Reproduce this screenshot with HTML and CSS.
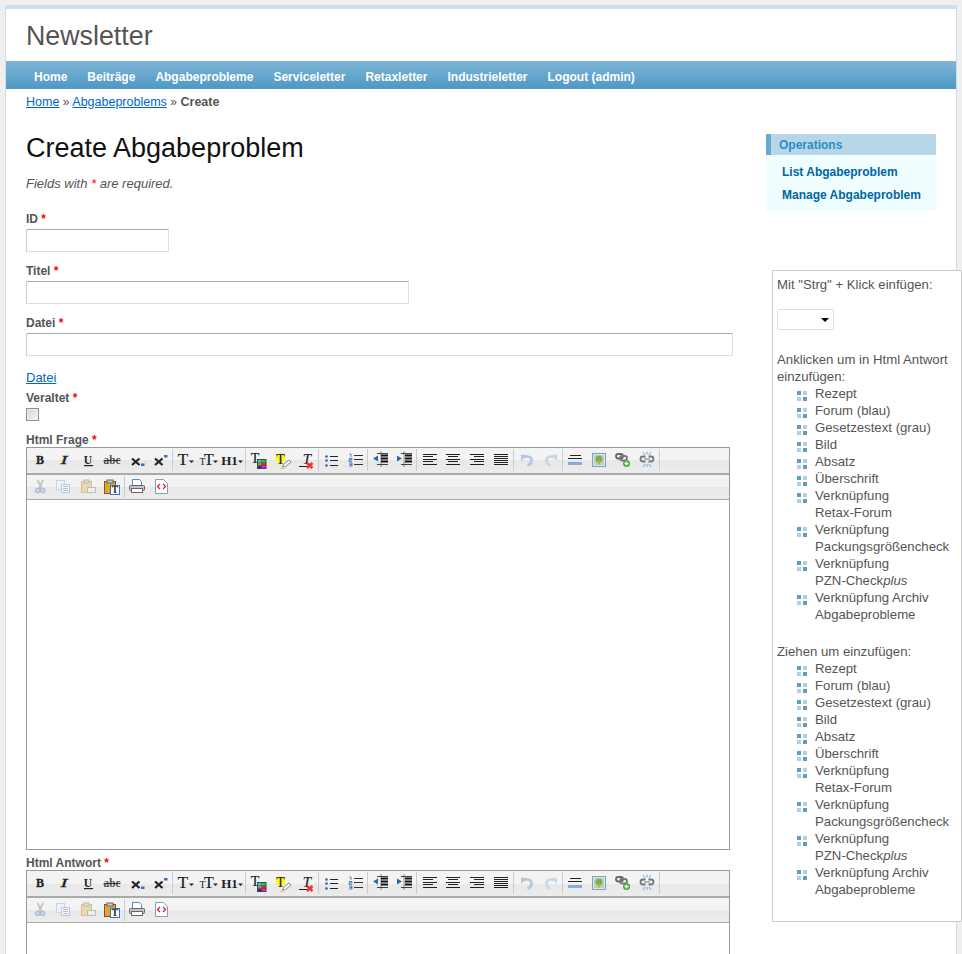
FILE: index.html
```html
<!DOCTYPE html>
<html lang="de">
<head>
<meta charset="utf-8">
<title>Newsletter - Create Abgabeproblem</title>
<link rel="stylesheet" href="styles.css">
</head>
<body>
<svg class="defs" width="0" height="0" aria-hidden="true">
  <defs>
    <symbol id="i-b" viewBox="0 0 24 24"><text x="12" y="16" class="t-serif t-bold" font-size="12" text-anchor="middle" stroke="#222" stroke-width=".3">B</text></symbol>
    <symbol id="i-i" viewBox="0 0 24 24"><text x="12" y="16" class="t-serif t-it" font-size="12" text-anchor="middle" stroke="#222" stroke-width=".3" textLength="7" lengthAdjust="spacingAndGlyphs">I</text></symbol>
    <symbol id="i-u" viewBox="0 0 24 24"><text x="12" y="15.500" class="t-serif t-bold" font-size="11.500" text-anchor="middle">U</text><rect x="8" y="17" width="9" height="1.200" fill="#222"/></symbol>
    <symbol id="i-s" viewBox="0 0 24 24"><text x="12" y="16" class="t-serif t-bold" font-size="11.500" text-anchor="middle" fill-opacity=".8" textLength="17" lengthAdjust="spacingAndGlyphs">abc</text><rect x="3.500" y="12" width="17" height="1" fill="#333"/></symbol>
    <symbol id="i-sub" viewBox="0 0 24 24"><path d="M8 10.500l7.500 6.500M15.500 10.500l-7.500 6.500" stroke="#222" stroke-width="2.200" fill="none"/><rect x="17" y="15.500" width="3.500" height="2.500" fill="#3a6fc0"/></symbol>
    <symbol id="i-sup" viewBox="0 0 24 24"><path d="M7 10.500l7.500 6.500M14.500 10.500l-7.500 6.500" stroke="#222" stroke-width="2.200" fill="none"/><rect x="16" y="7" width="3.500" height="2.500" fill="#3a6fc0"/></symbol>
    <symbol id="i-font" viewBox="0 0 24 24"><text x="10" y="17" class="t-serif" font-size="17" text-anchor="middle" stroke="#222" stroke-width=".2">T</text><path d="M16 12.500h5l-2.500 2.500z" fill="#222"/></symbol>
    <symbol id="i-size" viewBox="0 0 24 24"><text x="5.500" y="17" class="t-serif" font-size="10" text-anchor="middle">T</text><text x="12" y="17" class="t-serif" font-size="16" text-anchor="middle" stroke="#222" stroke-width=".2">T</text><path d="M16 12.500h5l-2.500 2.500z" fill="#222"/></symbol>
    <symbol id="i-h1" viewBox="0 0 24 24"><text x="8.500" y="17" class="t-serif t-bold" font-size="13" text-anchor="middle">H1</text><path d="M17 12.500h5l-2.500 2.500z" fill="#222"/></symbol>
    <symbol id="i-color" viewBox="0 0 24 24"><text x="9" y="15" class="t-serif" font-size="14" text-anchor="middle" stroke="#222" stroke-width=".2">T</text><rect x="11" y="11" width="9.500" height="10" fill="#445"/><rect x="12" y="12" width="3.500" height="2.500" fill="#1dd"/><rect x="16" y="12" width="3.500" height="2.500" fill="#2c2"/><rect x="12" y="15" width="3.500" height="2.500" fill="#c80"/><rect x="16" y="15" width="3.500" height="2.500" fill="#e22"/><rect x="12" y="18" width="3.500" height="2" fill="#22d"/><rect x="16" y="18" width="3.500" height="2" fill="#e2e"/></symbol>
    <symbol id="i-hilite" viewBox="0 0 24 24"><circle cx="10.500" cy="10" r="4.800" fill="#ff0"/><text x="10.500" y="16" class="t-serif" font-size="14" text-anchor="middle" stroke="#222" stroke-width=".2">T</text><path d="M12.500 19l1-2.500 5.500-4.500 2 2-5.500 4.500z" fill="#fff" stroke="#666" stroke-width=".8"/><path d="M10 21h5l-1.500-2.500-2 .500z" fill="#e8c878"/></symbol>
    <symbol id="i-clear" viewBox="0 0 24 24"><text x="13" y="16" class="t-serif t-it" font-size="15" text-anchor="middle" stroke="#222" stroke-width=".2">T</text><rect x="5" y="18" width="13" height="1" fill="#222"/><path d="M13 15l5.500 5M18.500 15l-5.500 5" stroke="#e33" stroke-width="2.400"/></symbol>
    <symbol id="i-ul" viewBox="0 0 24 24"><path d="M11 8.500h8M11 12.500h8M11 17.500h8" stroke="#222"/><circle cx="7.500" cy="8.500" r="1.300" fill="#2a66b8"/><circle cx="7.500" cy="12.500" r="1.300" fill="#2a66b8"/><circle cx="7.500" cy="17.500" r="1.300" fill="#2a66b8"/></symbol>
    <symbol id="i-ol" viewBox="0 0 24 24"><path d="M11 7.500h9M11 11.500h9M11 16.500h9" stroke="#333"/><path d="M6.500 6h1.500v3M6 10.500h3v1.300h-3v1.500h3M6 15h3v3h-3M6.500 16.500h2.500" stroke="#2a66b8" fill="none" stroke-width=".8"/></symbol>
    <symbol id="i-out" viewBox="0 0 24 24"><path d="M9 5.500h11M9 16.500h11" stroke="#444"/><path d="M13 7.500h7M13 10.500h7M13 13.500h7" stroke="#111" stroke-width="1.800"/><path d="M13 3.500v15" stroke="#222" stroke-dasharray="1 1"/><path d="M5 10.500l5-3v6z" fill="#2a66b8"/></symbol>
    <symbol id="i-in" viewBox="0 0 24 24"><path d="M9 5.500h11M9 16.500h11" stroke="#444"/><path d="M13 7.500h7M13 10.500h7M13 13.500h7" stroke="#111" stroke-width="1.800"/><path d="M12 3.500v15" stroke="#222" stroke-dasharray="1 1"/><path d="M10 10.500l-5-3v6z" fill="#2a66b8"/></symbol>
    <symbol id="i-al" viewBox="0 0 24 24"><path d="M6 6.500h14M6 8.500h10M6 11.500h14M6 13.500h10M6 16.500h14" stroke="#222"/></symbol>
    <symbol id="i-ac" viewBox="0 0 24 24"><path d="M5 6.500h14M7 8.500h10M5 11.500h14M7 13.500h10M5 16.500h14" stroke="#222"/></symbol>
    <symbol id="i-ar" viewBox="0 0 24 24"><path d="M5 6.500h14M9 8.500h10M5 11.500h14M9 13.500h10M5 16.500h14" stroke="#222"/></symbol>
    <symbol id="i-aj" viewBox="0 0 24 24"><path d="M5 6.500h14M5 8.500h14M5 10.500h14M5 12.500h14M5 14.500h14M5 16.500h14" stroke="#222"/></symbol>
    <symbol id="i-undo" viewBox="0 0 24 24"><path d="M10 9c5-1.500 8 .5 7.500 4-.3 2.500-2.500 4-4 4.500" stroke="#b4c8de" stroke-width="2.600" fill="none"/><path d="M7 6.500v6.500l6-6z" fill="#b4c8de"/></symbol>
    <symbol id="i-redo" viewBox="0 0 24 24"><path d="M16 9c-5-1.500-8 .5-7.500 4 .3 2.500 2.500 4 4 4.500" stroke="#c8d8e8" stroke-width="2.600" fill="none"/><path d="M19 6.500v6.500l-6-6z" fill="#c8d8e8"/></symbol>
    <symbol id="i-hr" viewBox="0 0 24 24"><path d="M7 7.500h11M5 10.500h14" stroke="#222"/><rect x="5" y="14" width="14" height="3" fill="#8aa9dc"/></symbol>
    <symbol id="i-img" viewBox="0 0 24 24"><rect x="5.500" y="5.500" width="13" height="13" fill="#dce6f2" stroke="#7f9fc9"/><rect x="7" y="7" width="10" height="10" fill="#b8d8a8"/><circle cx="12" cy="11" r="3.500" fill="#7ab05f"/><rect x="11" y="13" width="2" height="3.500" fill="#e0a040"/></symbol>
    <symbol id="i-link" viewBox="0 0 24 24"><rect x="5" y="6" width="7" height="4.500" rx="2.200" fill="none" stroke="#666" stroke-width="1.800"/><rect x="9" y="8" width="7" height="4.500" rx="2.200" fill="none" stroke="#777" stroke-width="1.800"/><circle cx="15.500" cy="15.500" r="3.500" fill="#4aa83a"/><path d="M15.500 13.500v4M13.500 15.500h4" stroke="#fff" stroke-width="1.300"/></symbol>
    <symbol id="i-unlink" viewBox="0 0 24 24"><path d="M10.500 8.500h-2.500a2.500 2.500 0 0 0 0 5h2.500M13.500 8.500h2.500a2.500 2.500 0 0 1 0 5h-2.500" fill="none" stroke="#777" stroke-width="1.800"/><path d="M9 11h6" stroke="#777"/><path d="M8 4l2 3M16 4l-2 3M12 3.500v3M8 19l2-3M16 19l-2-3M12 19v-3" stroke="#6fa8e0"/></symbol>
    <symbol id="i-cut" viewBox="0 0 24 24"><path d="M9.500 5l4 8.500M15 5l-4 8.500" stroke="#c4c4c4" stroke-width="1.800"/><circle cx="9.700" cy="15.500" r="2" fill="none" stroke="#a9bcd8" stroke-width="1.600"/><circle cx="14.700" cy="15.500" r="2" fill="none" stroke="#a9bcd8" stroke-width="1.600"/></symbol>
    <symbol id="i-copy" viewBox="0 0 24 24"><rect x="4.500" y="5.500" width="8" height="9" fill="#eef1f8" stroke="#c8d2e8"/><rect x="9.500" y="9.500" width="8" height="8" fill="#f6f8fc" stroke="#b8c8e4"/><path d="M11 11.500h5M11 13.500h5M11 15.500h5" stroke="#a8bce0"/></symbol>
    <symbol id="i-paste" viewBox="0 0 24 24"><rect x="5.500" y="6.500" width="10" height="11" fill="#ecd9a8" stroke="#d4c090"/><rect x="8" y="5" width="5" height="3" fill="#ddd" stroke="#bbb"/><rect x="11.500" y="12.500" width="8" height="5" fill="#eee" stroke="#bbb"/></symbol>
    <symbol id="i-pastet" viewBox="0 0 24 24"><rect x="4.500" y="6.500" width="11" height="12" fill="#e0a830" stroke="#7a5a20"/><rect x="7" y="5" width="6" height="3" fill="#ccc" stroke="#666"/><rect x="10.500" y="10.500" width="9" height="9" fill="#fff" stroke="#3a6fc0"/><text x="15" y="18" class="t-serif t-bold" font-size="9.500" text-anchor="middle">T</text></symbol>
    <symbol id="i-print" viewBox="0 0 24 24"><path d="M7.500 10.500v-6h7l2 2v4" fill="#fff" stroke="#5a86c8"/><rect x="4.500" y="10.500" width="15" height="5" rx="1" fill="#c4c4c4" stroke="#666"/><rect x="6.500" y="13.500" width="11" height="4" fill="#fff" stroke="#666"/></symbol>
    <symbol id="i-src" viewBox="0 0 24 24"><path d="M6.500 4.500h8l4 4v10h-12z" fill="#fff" stroke="#7f9fc9"/><path d="M11 9l-2.500 2.500 2.500 2.500M14 9l2.500 2.500-2.500 2.500" stroke="#d22" fill="none" stroke-width="1.300"/></symbol>
  </defs>
</svg>

<div class="page">
  <header class="header"><div class="logo">Newsletter</div></header>
  <nav class="mainmenu">
    <a href="#">Home</a><a href="#">Beiträge</a><a href="#">Abgabeprobleme</a><a href="#">Serviceletter</a><a href="#">Retaxletter</a><a href="#">Industrieletter</a><a href="#">Logout (admin)</a>
  </nav>
  <div class="breadcrumbs"><a href="#">Home</a> <span class="sep">»</span> <a href="#">Abgabeproblems</a> <span class="sep">»</span> <span class="current">Create</span></div>

  <div class="columns">
    <main class="content">
      <h1>Create Abgabeproblem</h1>
      <p class="note">Fields with <span class="req">*</span> are required.</p>

      <div class="row"><label>ID <span class="req">*</span></label><input class="in-id" type="text"></div>
      <div class="row"><label>Titel <span class="req">*</span></label><input class="in-titel" type="text"></div>
      <div class="row"><label>Datei <span class="req">*</span></label><input class="in-datei" type="text"></div>
      <a class="file-link" href="#">Datei</a>
      <div class="row-check"><label>Veraltet <span class="req">*</span></label><span class="check"></span></div>

      <label class="ed-label">Html Frage <span class="req">*</span></label>
      <div class="editor">
        <div class="tb">
          <span class="b"><svg><use href="#i-b"/></svg></span><span class="b"><svg><use href="#i-i"/></svg></span><span class="b"><svg><use href="#i-u"/></svg></span><span class="b"><svg><use href="#i-s"/></svg></span><span class="b"><svg><use href="#i-sub"/></svg></span><span class="b"><svg><use href="#i-sup"/></svg></span><i class="s"></i>
          <span class="b"><svg><use href="#i-font"/></svg></span><span class="b"><svg><use href="#i-size"/></svg></span><span class="b"><svg><use href="#i-h1"/></svg></span><i class="s"></i>
          <span class="b"><svg><use href="#i-color"/></svg></span><span class="b"><svg><use href="#i-hilite"/></svg></span><span class="b"><svg><use href="#i-clear"/></svg></span><i class="s"></i>
          <span class="b"><svg><use href="#i-ul"/></svg></span><span class="b"><svg><use href="#i-ol"/></svg></span><i class="s"></i>
          <span class="b"><svg><use href="#i-out"/></svg></span><span class="b"><svg><use href="#i-in"/></svg></span><i class="s"></i>
          <span class="b"><svg><use href="#i-al"/></svg></span><span class="b"><svg><use href="#i-ac"/></svg></span><span class="b"><svg><use href="#i-ar"/></svg></span><span class="b"><svg><use href="#i-aj"/></svg></span><i class="s"></i>
          <span class="b"><svg><use href="#i-undo"/></svg></span><span class="b"><svg><use href="#i-redo"/></svg></span><i class="s"></i>
          <span class="b"><svg><use href="#i-hr"/></svg></span><span class="b"><svg><use href="#i-img"/></svg></span><span class="b"><svg><use href="#i-link"/></svg></span><span class="b"><svg><use href="#i-unlink"/></svg></span><i class="s"></i>
        </div>
        <div class="tb tb2">
          <span class="b"><svg><use href="#i-cut"/></svg></span><span class="b"><svg><use href="#i-copy"/></svg></span><span class="b"><svg><use href="#i-paste"/></svg></span><span class="b"><svg><use href="#i-pastet"/></svg></span><i class="s"></i>
          <span class="b"><svg><use href="#i-print"/></svg></span><span class="b"><svg><use href="#i-src"/></svg></span>
        </div>
        <div class="area"></div>
      </div>

      <label class="ed-label ed-label2">Html Antwort <span class="req">*</span></label>
      <div class="editor">
        <div class="tb">
          <span class="b"><svg><use href="#i-b"/></svg></span><span class="b"><svg><use href="#i-i"/></svg></span><span class="b"><svg><use href="#i-u"/></svg></span><span class="b"><svg><use href="#i-s"/></svg></span><span class="b"><svg><use href="#i-sub"/></svg></span><span class="b"><svg><use href="#i-sup"/></svg></span><i class="s"></i>
          <span class="b"><svg><use href="#i-font"/></svg></span><span class="b"><svg><use href="#i-size"/></svg></span><span class="b"><svg><use href="#i-h1"/></svg></span><i class="s"></i>
          <span class="b"><svg><use href="#i-color"/></svg></span><span class="b"><svg><use href="#i-hilite"/></svg></span><span class="b"><svg><use href="#i-clear"/></svg></span><i class="s"></i>
          <span class="b"><svg><use href="#i-ul"/></svg></span><span class="b"><svg><use href="#i-ol"/></svg></span><i class="s"></i>
          <span class="b"><svg><use href="#i-out"/></svg></span><span class="b"><svg><use href="#i-in"/></svg></span><i class="s"></i>
          <span class="b"><svg><use href="#i-al"/></svg></span><span class="b"><svg><use href="#i-ac"/></svg></span><span class="b"><svg><use href="#i-ar"/></svg></span><span class="b"><svg><use href="#i-aj"/></svg></span><i class="s"></i>
          <span class="b"><svg><use href="#i-undo"/></svg></span><span class="b"><svg><use href="#i-redo"/></svg></span><i class="s"></i>
          <span class="b"><svg><use href="#i-hr"/></svg></span><span class="b"><svg><use href="#i-img"/></svg></span><span class="b"><svg><use href="#i-link"/></svg></span><span class="b"><svg><use href="#i-unlink"/></svg></span><i class="s"></i>
        </div>
        <div class="tb tb2">
          <span class="b"><svg><use href="#i-cut"/></svg></span><span class="b"><svg><use href="#i-copy"/></svg></span><span class="b"><svg><use href="#i-paste"/></svg></span><span class="b"><svg><use href="#i-pastet"/></svg></span><i class="s"></i>
          <span class="b"><svg><use href="#i-print"/></svg></span><span class="b"><svg><use href="#i-src"/></svg></span>
        </div>
        <div class="area"></div>
      </div>
    </main>

    <aside class="sidebar">
      <div class="portlet">
        <div class="portlet-title">Operations</div>
        <ul class="ops">
          <li><a href="#">List Abgabeproblem</a></li>
          <li><a href="#">Manage Abgabeproblem</a></li>
        </ul>
      </div>
    </aside>
  </div>
</div>

<div class="snippets">
  <p class="sn-p">Mit "Strg" + Klick einfügen:</p>
  <div class="select"><svg width="8" height="4" viewBox="0 0 8 4"><path d="M0 0h8L4 4z" fill="#000"/></svg></div>
  <p class="sn-p2">Anklicken um in Html Antwort einzufügen:</p>
  <ul class="sn-list">
    <li>Rezept</li><li>Forum (blau)</li><li>Gesetzestext (grau)</li><li>Bild</li><li>Absatz</li><li>Überschrift</li>
    <li>Verknüpfung <span class="nb">Retax-Forum</span></li><li>Verknüpfung Packungsgrößencheck</li><li>Verknüpfung <span class="nb">PZN-Check<em>plus</em></span></li><li>Verknüpfung Archiv Abgabeprobleme</li>
  </ul>
  <p class="sn-p3">Ziehen um einzufügen:</p>
  <ul class="sn-list">
    <li>Rezept</li><li>Forum (blau)</li><li>Gesetzestext (grau)</li><li>Bild</li><li>Absatz</li><li>Überschrift</li>
    <li>Verknüpfung <span class="nb">Retax-Forum</span></li><li>Verknüpfung Packungsgrößencheck</li><li>Verknüpfung <span class="nb">PZN-Check<em>plus</em></span></li><li>Verknüpfung Archiv Abgabeprobleme</li>
  </ul>
</div>
</body>
</html>
```
FILE: styles.css
```css
* { box-sizing: border-box; }
html, body { margin: 0; height: 954px; overflow: hidden; }
body { background: #efefef; font: 12px/18px "Liberation Sans", Arial, sans-serif; color: #555; position: relative; }
.defs { position: absolute; }
.t-serif { font-family: "Liberation Serif", serif; fill: #222; }
.t-bold { font-weight: bold; }
.t-it { font-style: italic; }

.page { width: 952px; margin: 5px 0 0 5px; background: #fff; border: 1px solid #c9e0ed; border-top-width: 4px; height: 1400px; }
.header { height: 52px; padding: 10px 0 0 20px; }
.logo { font-size: 26.800px; line-height: 34px; color: #555; }
.mainmenu { height: 28px; background: linear-gradient(#80b5d6, #4d98c4); padding: 0 18px; display: flex; }
.mainmenu a { color: #fff; font-weight: bold; text-decoration: none; padding: 0 10px; line-height: 32px; }
.breadcrumbs { padding: 4px 20px 0; height: 22px; font-size: 12.500px; }
.breadcrumbs a { color: #06c; }
.sep { font-size: 12px; }
.current { font-weight: bold; }

.columns { display: flex; padding-left: 20px; padding-top: 23px; }
.content { width: 740px; flex: none; }
.sidebar { width: 170px; flex: none; }

h1 { margin: -2px 0 0; font-weight: normal; font-size: 27px; line-height: 32px; color: #111; }
.note { margin: 11px 0 0; font-style: italic; font-size: 13px; height: 18px; }
.req { color: #f00; }
label { display: block; font-weight: bold; }

.row { height: 52px; }
.note + .row { margin-top: 17px; }
.row input { display: block; height: 23px; margin-top: 1px; padding: 0; background: #fff; border: 1px solid #ddd; border-top-color: #aaa; border-left-color: #ccc; border-radius: 1px; }
.in-id { width: 143px; }
.in-titel { width: 383px; }
.in-datei { width: 707px; }
.file-link { display: block; color: #06c; font-size: 13px; margin-top: 3px; }
.row-check { margin-top: 2px; }
.row-check label { height: 19px; }
.check { display: block; width: 13px; height: 13px; border: 1px solid #8e8e8e; background: linear-gradient(135deg, #d4d4d4, #f6f6f6); box-shadow: inset 0 0 0 1px #f0f0f0; }
.ed-label { margin-top: 10px; height: 16px; line-height: 18px; }
.ed-label2 { margin-top: 4px; }

.editor { width: 704px; border: 1px solid #999; background: #fff; }
.tb { display: flex; align-items: center; height: 27px; padding: 0 1px 1px 1px; background: linear-gradient(#f3f3f3 0, #f3f3f3 50%, #e8e8e8 50%, #ececec 100%); border-bottom: 2px solid #aaa; }
.tb2 { height: 25px; padding-bottom: 0; border-bottom: 1px solid #aaa; }
.b { width: 24px; height: 24px; flex: none; }
.b svg { width: 24px; height: 24px; display: block; }
.s { width: 1px; height: 22px; background: #ccc; flex: none; }
.area { height: 349px; }

.portlet { background: #effdff; height: 77px; }
.portlet-title { height: 21px; background: #b7d6e7; border-left: 5px solid #6aa9cf; color: #298dcd; font-weight: bold; line-height: 22px; padding-left: 8px; }
.ops { list-style: none; margin: 0; padding: 6px 0 0 16px; }
.ops li { height: 23px; line-height: 23px; }
.ops a { color: #0066a4; font-weight: bold; text-decoration: none; }

.snippets { position: absolute; left: 772px; top: 270px; width: 190px; height: 652px; background: #fff; border: 1px solid #ccc; padding: 5px 4px; line-height: 17px; font-size: 13.200px; }
.snippets p { margin: 0; }
.select { width: 57px; height: 21px; margin-top: 16px; border: 1px solid #ddd; border-radius: 2px; display: flex; align-items: center; justify-content: flex-end; padding-right: 4px; }
.snippets .sn-p2 { margin-top: 21px; }
.snippets .sn-p3 { margin-top: 20px; }
.sn-list { list-style: none; margin: 0; padding: 0 0 0 38px; }
.sn-list li { position: relative; }
.nb { white-space: nowrap; }
.sn-list li::before { content: ""; position: absolute; left: -18px; top: 6px; width: 10px; height: 10px; background: linear-gradient(#5f9dbf, #5f9dbf) 0 0/4px 4px no-repeat, linear-gradient(#b3d0e0, #b3d0e0) 6px 0/4px 4px no-repeat, linear-gradient(#b3d0e0, #b3d0e0) 0 6px/4px 4px no-repeat, linear-gradient(#5f9dbf, #5f9dbf) 6px 6px/4px 4px no-repeat; }
```
